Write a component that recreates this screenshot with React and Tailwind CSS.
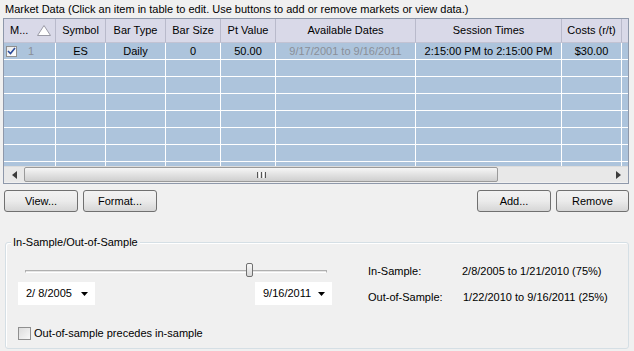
import React from 'react';

const font = { fontFamily: '"Liberation Sans", Arial, sans-serif' };

const columns = [
	{ key: 'm', title: 'M...', w: 'w-[52px]' },
	{ key: 'symbol', title: 'Symbol', w: 'w-[50px]' },
	{ key: 'barType', title: 'Bar Type', w: 'w-[60px]' },
	{ key: 'barSize', title: 'Bar Size', w: 'w-[55px]' },
	{ key: 'pt', title: 'Pt Value', w: 'w-[55px]' },
	{ key: 'dates', title: 'Available Dates', w: 'w-[140px]' },
	{ key: 'session', title: 'Session Times', w: 'w-[146px]' },
	{ key: 'costs', title: 'Costs (r/t)', w: 'w-[60px]' },
];

const firstRow = {
	symbol: 'ES',
	barType: 'Daily',
	barSize: '0',
	pt: '50.00',
	dates: '9/17/2001 to 9/16/2011',
	session: '2:15:00 PM to 2:15:00 PM',
	costs: '$30.00',
};

function SortIcon() {
	return (
		<svg width="14" height="11" viewBox="0 0 14 11" className="ml-[9px]">
			<path d="M7 0.5 L13.5 10.5 L0.5 10.5 Z" fill="#ffffff" stroke="#9a9aa6" strokeWidth="1" />
		</svg>
	);
}

function RowCheck() {
	return (
		<div className="w-[11px] h-[11px] border border-[#8f8f8f] bg-gradient-to-br from-[#e9e9e9] to-white flex items-center justify-center">
			<svg width="9" height="8" viewBox="0 0 9 8">
				<path d="M1 4 L3.5 6.5 L8 1" fill="none" stroke="#2a4a9a" strokeWidth="1.6" />
			</svg>
		</div>
	);
}

function Btn({ children, className = '' }) {
	return (
		<div className={`h-[22px] rounded-[3px] border border-[#707070] bg-gradient-to-b from-[#f2f2f2] via-[#ebebeb] to-[#d6d6d6] flex items-center justify-center text-[11px] text-black ${className}`}>
			{children}
		</div>
	);
}

function Arrow({ dir }) {
	return (
		<svg width="5" height="8" viewBox="0 0 5 8">
			{dir === 'left'
				? <path d="M5 0 L5 8 L0 4 Z" fill="#3c3c3c" />
				: <path d="M0 0 L0 8 L5 4 Z" fill="#3c3c3c" />}
		</svg>
	);
}

function DateBox({ value, className = '' }) {
	return (
		<div className={`h-[23px] w-[77px] bg-white flex items-center justify-between pl-[8px] pr-[7px] text-[11px] ${className}`}>
			<span className="whitespace-pre">{value}</span>
			<svg width="7" height="4" viewBox="0 0 7 4"><path d="M0 0 L7 0 L3.5 4 Z" fill="#000" /></svg>
		</div>
	);
}

export default function App() {
	const emptyRows = [1, 2, 3, 4, 5, 6, 7];

	return (
		<div style={font} className="w-[634px] h-[351px] bg-[#f0f0f0] text-black overflow-hidden">
			<div className="h-[18px] pl-[5px] pt-[2px] text-[11px] leading-[14px]">
				Market Data (Click an item in table to edit. Use buttons to add or remove markets or view data.)
			</div>

			{/* table */}
			<div className="ml-[3px] w-[626px] h-[166px] border border-[#8e98aa] bg-[#f0f0f0] flex flex-col">
				<div className="h-[24px] flex bg-[#d9d9e8] border-b border-[#c2c3d3] text-[11px]">
					{columns.map((c) => (
						<div key={c.key} className={`${c.w} h-full border-r border-[#b9bacb] flex items-center ${c.key === 'm' ? 'pl-[6px]' : 'justify-center'}`}>
							{c.title}
							{c.key === 'm' && <SortIcon />}
						</div>
					))}
					<div className="flex-1" />
				</div>
				<div className="h-[123px] overflow-hidden bg-[#adc4dc] text-[11px]">
					<div className="h-[17px] flex border-b border-white">
						<div className="w-[52px] border-r border-white flex items-center pl-[2px]">
							<RowCheck />
							<span className="ml-[11px] text-[#8a8f98]">1</span>
						</div>
						{columns.slice(1).map((c) => (
							<div key={c.key} className={`${c.w} border-r border-white flex items-center justify-center ${c.key === 'dates' ? 'text-[#8a8f98]' : ''}`}>
								{firstRow[c.key]}
							</div>
						))}
					</div>
					{emptyRows.map((r) => (
						<div key={r} className="h-[17px] flex border-b border-white">
							{columns.map((c) => (
								<div key={c.key} className={`${c.w} border-r border-white`} />
							))}
						</div>
					))}
				</div>
				{/* horizontal scrollbar */}
				<div className="h-[16px] flex items-center bg-[#e8e8e8] border-t border-[#dcdcdc]">
					<div className="w-[20px] h-full flex items-center justify-center"><Arrow dir="left" /></div>
					<div className="w-[474px] h-[15px] rounded-[2px] border border-[#9a9a9a] bg-gradient-to-b from-[#f6f6f6] via-[#e2e2e2] to-[#cfcfcf] flex items-center justify-center">
						<div className="flex gap-[1px]">
							<div className="w-[1px] h-[6px] bg-[#555]" />
							<div className="w-[1px] h-[6px] bg-[#fff]" />
							<div className="w-[1px] h-[6px] bg-[#555]" />
							<div className="w-[1px] h-[6px] bg-[#fff]" />
							<div className="w-[1px] h-[6px] bg-[#555]" />
						</div>
					</div>
					<div className="flex-1" />
					<div className="w-[20px] h-full flex items-center justify-center"><Arrow dir="right" /></div>
				</div>
			</div>

			{/* buttons */}
			<div className="mt-[6px] ml-[4px] w-[625px] flex justify-between">
				<div className="flex gap-[5px]">
					<Btn className="w-[74px]">View...</Btn>
					<Btn className="w-[74px]">Format...</Btn>
				</div>
				<div className="flex gap-[5px]">
					<Btn className="w-[74px]">Add...</Btn>
					<Btn className="w-[73px]">Remove</Btn>
				</div>
			</div>

			{/* group box */}
			<div className="relative mt-[30px] ml-[5px] w-[624px] h-[107px] rounded-[3px] border border-[#d5dfe5] shadow-[inset_1px_1px_0_#ffffff] text-[11px]">
				<div className="absolute -top-[8px] left-[5px] px-[2px] bg-[#f0f0f0] leading-[14px]">In-Sample/Out-of-Sample</div>
				<div className="flex pt-[20px]">
					<div className="w-[349px] pl-[12px]">
						<div className="relative h-[16px] ml-[7px] w-[302px] flex items-center">
							<div className="w-full h-[3px] border border-[#b0b0b0] border-b-white bg-[#e6e6e6]" />
							<div className="absolute left-[221px] top-0 w-[7px] h-[14px] rounded-[2px] border border-[#707070] bg-gradient-to-b from-[#f8f8f8] to-[#d8d8d8]" />
						</div>
						<div className="flex mt-[3px]">
							<DateBox value="2/ 8/2005" />
							<DateBox value="9/16/2011" className="ml-[160px]" />
						</div>
						<div className="flex items-center mt-[20px]">
							<div className="w-[13px] h-[13px] border border-[#8f8f8f] bg-gradient-to-br from-[#dcdcdc] to-[#f8f8f8]" />
							<span className="ml-[3px]">Out-of-sample precedes in-sample</span>
						</div>
					</div>
					<div className="pl-[13px] pt-[0px]">
						<div className="flex h-[16px] items-center">
							<span className="w-[94px]">In-Sample:</span>
							<span>2/8/2005 to 1/21/2010 (75%)</span>
						</div>
						<div className="flex h-[16px] items-center mt-[10px]">
							<span className="w-[95px]">Out-of-Sample:</span>
							<span>1/22/2010 to 9/16/2011 (25%)</span>
						</div>
					</div>
				</div>
			</div>
		</div>
	);
}
